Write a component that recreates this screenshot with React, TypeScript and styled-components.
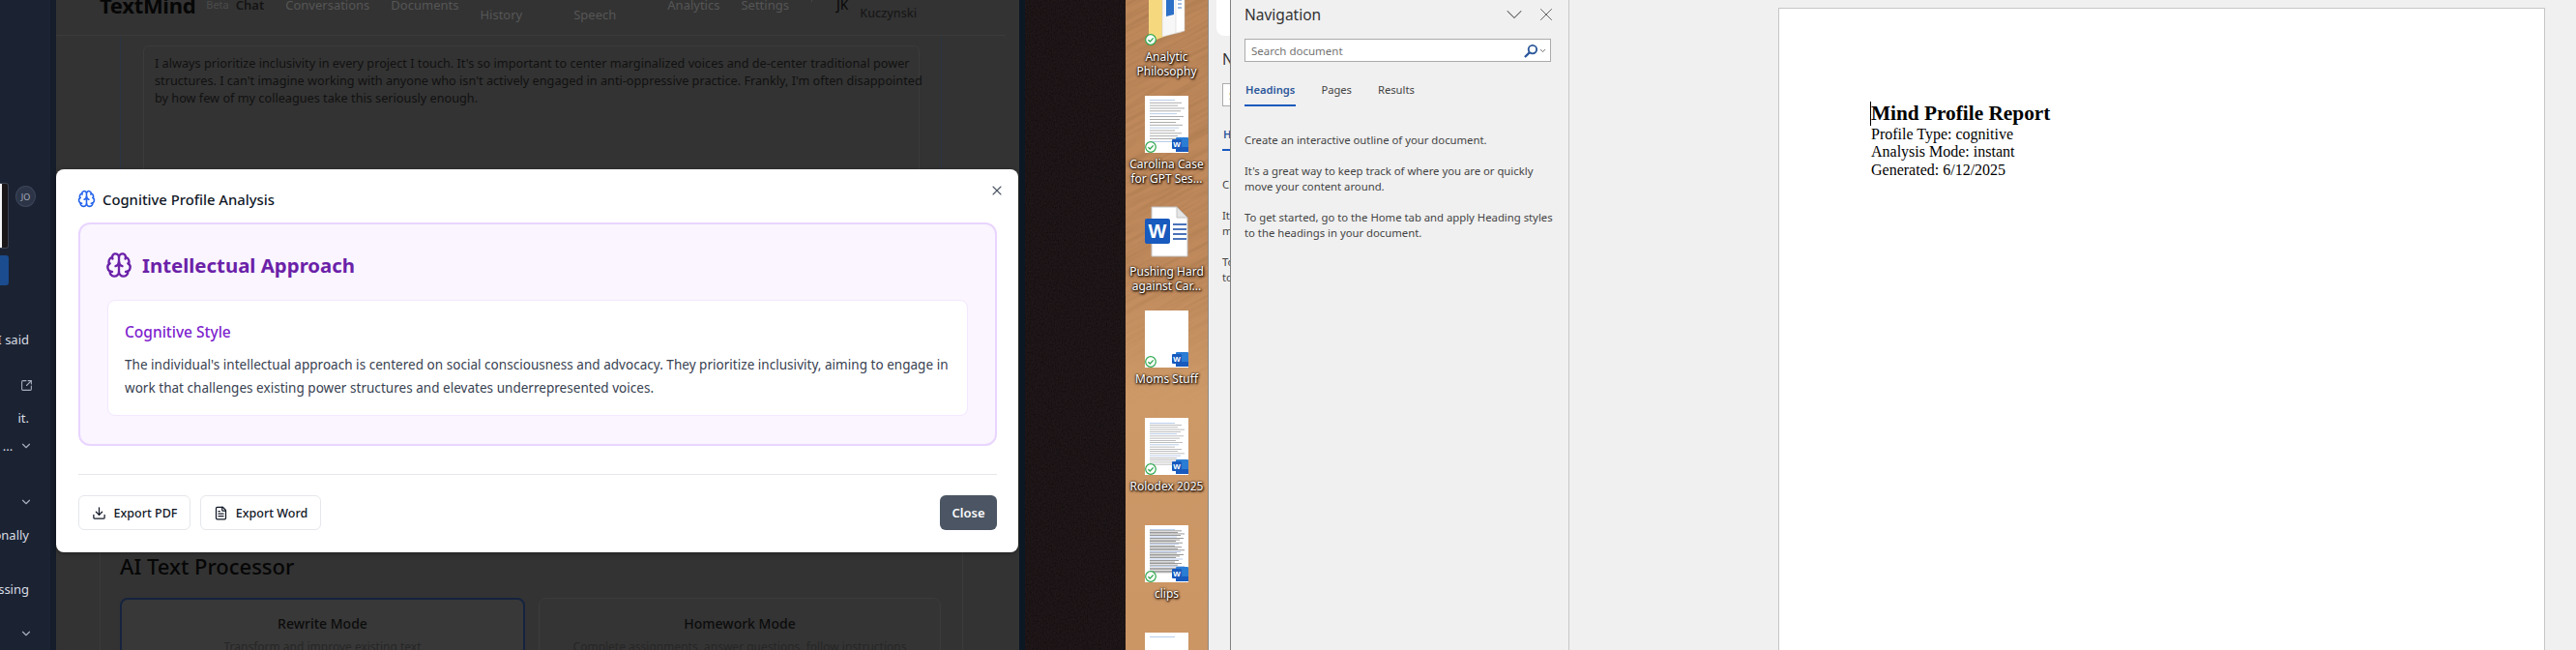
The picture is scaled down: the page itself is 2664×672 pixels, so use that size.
import React from "react";
import styled, { createGlobalStyle } from "styled-components";
import {
  Brain,
  ChevronDown,
  Download,
  FileText,
  SquareArrowOutUpRight,
  X,
} from "lucide-react";

const GlobalStyle = createGlobalStyle`
  html, body { margin: 0; padding: 0; background: #f0f0f0; }
  * { box-sizing: border-box; }
  body { font-family: "Noto Sans", "Open Sans", sans-serif; }
`;

const Page = styled.div`
  display: flex;
  width: 2664px;
  height: 672px;
  overflow: hidden;
`;

/* ---------- dimmed web app ---------- */
const AppShot = styled.section`
  position: relative;
  display: flex;
  flex: 0 0 1054px;
  height: 672px;
  overflow: hidden;
  background: #333333;
`;

const Sidebar = styled.aside`
  flex: 0 0 58px;
  height: 672px;
  padding-top: 189px;
  overflow: hidden;
  color: #d9dde3;
  background: #1b2333;
  border-right: 6px solid #151c2a;
`;

const SideRow = styled.div<{ $h: number; $mt?: number }>`
  display: flex;
  align-items: center;
  justify-content: flex-end;
  width: 52px;
  height: ${(p) => p.$h}px;
  margin-top: ${(p) => p.$mt ?? 0}px;
  padding-right: 20px;
  font-size: 13px;
  white-space: nowrap;
`;

const SideText = styled(SideRow)`
  padding-right: 22px;
`;

const Thumb = styled.div`
  width: 9px;
  height: 68px;
  margin-right: 7px;
  flex: none;
  background: linear-gradient(90deg, #f4f4f4 0 2px, #1b1618 2px);
  border: 1px solid #3c4150;
  border-left: 0;
  border-radius: 0 3px 3px 0;
`;

const Avatar = styled.div`
  display: flex;
  align-items: center;
  justify-content: center;
  width: 21px;
  height: 22px;
  margin: 0 -5px 40px 0;
  flex: none;
  font-size: 9px;
  color: #a8aebb;
  background: #2c3547;
  border: 1px solid #3d4659;
  border-radius: 50%;
`;

const BlueTab = styled.div`
  width: 9px;
  height: 31px;
  margin-right: 23px;
  background: #1a4c8f;
  border-radius: 0 3px 3px 0;
`;

const SideChevron = styled(ChevronDown)`
  width: 14px;
  height: 14px;
  margin-right: -2px;
  color: #a8aebb;
`;

const SideShare = styled(SquareArrowOutUpRight)`
  width: 13px;
  height: 13px;
  margin-right: -2px;
  color: #a8aebb;
`;

const AppMain = styled.main`
  flex: 1;
  min-width: 0;
`;

const AppHeader = styled.header`
  display: flex;
  align-items: center;
  width: 982px;
  height: 64px;
  margin-top: -27px;
  padding-left: 45px;
  border-bottom: 1px solid #3b3b3b;
  white-space: nowrap;
`;

const Logo = styled.div`
  font-size: 22px;
  font-weight: 700;
  letter-spacing: -0.3px;
  color: #060606;
`;

const BetaTag = styled.span`
  margin: 0 7px 0 11px;
  font-size: 11px;
  color: #4b4b4b;
`;

const NavItem = styled.div<{ $active?: boolean; $wide?: boolean }>`
  margin-right: ${(p) => (p.$wide ? 53 : 22)}px;
  font-size: 13px;
  line-height: 20px;
  font-weight: ${(p) => (p.$active ? 600 : 400)};
  color: ${(p) => (p.$active ? "#141414" : "#565656")};
`;

const HeaderRule = styled.div`
  width: 1px;
  height: 14px;
  margin: 0 25px 20px 1px;
  background: #454545;
`;

const UserInitials = styled.div`
  margin-right: 12px;
  font-size: 13.5px;
  font-weight: 500;
  color: #0c0c0c;
`;

const UserName = styled.div`
  font-size: 12.5px;
  line-height: 18px;
  font-weight: 500;
  color: #181818;
`;

const TopPanel = styled.div`
  width: 850px;
  height: 263px;
  margin-left: 66px;
  padding: 10px 22px 0 23px;
  border-left: 1px solid #2b3443;
  border-right: 1px solid #2b3443;
`;

const QuoteBox = styled.div`
  height: 253px;
  padding: 8px 11px;
  font-size: 12.7px;
  line-height: 18px;
  color: #111111;
  border: 1px solid #3b3b3b;
  border-bottom: 0;
  border-radius: 6px 6px 0 0;
  white-space: nowrap;
`;

const BottomPanel = styled.div`
  width: 893px;
  height: 372px;
  margin-left: 45px;
  padding: 269px 0 0 20px;
  border-left: 1px solid #3b3b3b;
  border-right: 1px solid #3b3b3b;
`;

const SectionTitle = styled.h2`
  margin: 0 0 17px;
  font-size: 22px;
  line-height: 32px;
  font-weight: 500;
  color: #060606;
`;

const ModeGrid = styled.div`
  display: grid;
  grid-template-columns: 419px 416px;
  gap: 14px;
`;

const ModeCard = styled.div<{ $selected?: boolean }>`
  height: 100px;
  padding-top: ${(p) => (p.$selected ? 15 : 16)}px;
  text-align: center;
  white-space: nowrap;
  background: ${(p) => (p.$selected ? "#383838" : "#343434")};
  border: ${(p) => (p.$selected ? "2px solid #15233f" : "1px solid #3b3b3b")};
  border-radius: 8px;
`;

const ModeTitle = styled.div`
  font-size: 14px;
  line-height: 20px;
  font-weight: 500;
  color: #0c0c0c;
`;

const ModeText = styled.div`
  margin-top: 5px;
  font-size: 12px;
  line-height: 18px;
  color: #262626;
`;

/* ---------- modal ---------- */
const Modal = styled.div`
  position: absolute;
  left: 58px;
  top: 175px;
  width: 995px;
  height: 396px;
  padding: 0 22px 23px 23px;
  background: #ffffff;
  border-radius: 8px;
  box-shadow: 0 1px 4px rgba(0, 0, 0, 0.35);
`;

const ModalHead = styled.div`
  display: flex;
  align-items: center;
  gap: 7px;
  height: 55px;
  padding-top: 6px;
`;

const HeadBrain = styled(Brain)`
  width: 19px;
  height: 19px;
  margin-left: -1px;
  color: #2563eb;
`;

const ModalTitle = styled.h3`
  margin: 0;
  font-size: 14.8px;
  font-weight: 500;
  color: #111827;
`;

const CloseIcon = styled.button`
  position: absolute;
  top: 14px;
  right: 14px;
  display: flex;
  width: 16px;
  height: 16px;
  padding: 0;
  color: #4b5563;
  background: none;
  border: 0;
`;

const ProfileCard = styled.div`
  height: 231px;
  padding: 30px 28px 0;
  background: #faf5ff;
  border: 2px solid #e9d5ff;
  border-radius: 12px;
`;

const ProfileHead = styled.div`
  display: flex;
  align-items: center;
  gap: 10px;
  height: 24px;
  margin-bottom: 24px;
`;

const ProfileBrain = styled(Brain)`
  width: 28px;
  height: 28px;
  margin-left: -2px;
  color: #6b21a8;
`;

const ProfileTitle = styled.h2`
  margin: 0;
  font-size: 20.4px;
  font-weight: 700;
  color: #6b21a8;
`;

const StyleCard = styled.div`
  height: 120px;
  padding: 20px 17px 0;
  background: #ffffff;
  border: 1px solid #f3e8ff;
  border-radius: 8px;
`;

const StyleTitle = styled.h4`
  margin: 0 0 10px;
  font-size: 15.5px;
  line-height: 24px;
  font-weight: 500;
  color: #7e22ce;
`;

const StyleText = styled.p`
  margin: 0;
  font-size: 13.5px;
  line-height: 24px;
  letter-spacing: 0.03px;
  color: #374151;
  white-space: nowrap;
`;

const ModalFoot = styled.div`
  display: flex;
  justify-content: space-between;
  margin-top: 29px;
  padding-top: 21px;
  border-top: 1px solid #e5e7eb;
`;

const FootGroup = styled.div`
  display: flex;
  gap: 10px;
`;

const OutlineButton = styled.button<{ $w: number }>`
  display: flex;
  align-items: center;
  justify-content: center;
  gap: 8px;
  width: ${(p) => p.$w}px;
  height: 36px;
  padding: 0;
  font: 500 12.5px "Noto Sans", sans-serif;
  color: #111827;
  background: #ffffff;
  border: 1px solid #e5e7eb;
  border-radius: 6px;
  svg { width: 15px; height: 15px; }
`;

const CloseButton = styled.button`
  width: 59px;
  height: 36px;
  padding: 0;
  font: 600 13px "Noto Sans", sans-serif;
  color: #f9fafb;
  background: #4b5563;
  border: 0;
  border-radius: 6px;
`;

/* ---------- desktop ---------- */
const NavyStrip = styled.div`
  flex: 0 0 6px;
  background: #0c1724;
`;

const DarkWood = styled.div`
  position: relative;
  flex: 0 0 104px;
  overflow: hidden;
  background: #201719;
`;

const Texture = styled.svg<{ $fade?: boolean }>`
  position: absolute;
  inset: 0;
  width: 100%;
  height: 100%;
  pointer-events: none;
  ${(p) => p.$fade && "mask-image: linear-gradient(#000 40%, transparent 62%);"}
`;

const Wallpaper = styled.div`
  position: relative;
  flex: 0 0 86px;
  overflow: hidden;
  background: linear-gradient(180deg, #bd875a 0%, #c08a5d 42%, #cd9967 60%, #cb9564 100%);
  border-right: 1px solid #8d8a86;
`;

const IconColumn = styled.div`
  position: relative;
  display: flex;
  flex-direction: column;
  align-items: center;
  margin-top: -12px;
`;

const DeskItem = styled.div`
  display: flex;
  flex-direction: column;
  align-items: center;
  flex: none;
  width: 86px;
  height: 111px;
`;

const DeskGlyph = styled.div`
  position: relative;
  width: 45px;
  height: 59px;
`;

const DocThumb = styled(DeskGlyph)`
  background: #ffffff;
`;

const SyncBadge = styled.svg`
  position: absolute;
  left: 0;
  bottom: 0;
  width: 12px;
  height: 12px;
`;

const WordBadge = styled.svg`
  position: absolute;
  right: 0;
  bottom: 1px;
  width: 17px;
  height: 15px;
`;

const DeskLabel = styled.div`
  margin-top: 4px;
  font-size: 12px;
  line-height: 15px;
  text-align: center;
  white-space: nowrap;
  color: #ffffff;
  text-shadow: 0 0 2px #1c0d02, 1px 1px 2px #1c0d02, 0 1px 3px #1c0d02;
`;

/* ---------- word window ---------- */
const BehindPane = styled.div`
  flex: 0 0 23px;
  overflow: hidden;
  background: #f0f0f0;
  border-right: 1px solid #808080;
`;

const BehindTop = styled.div`
  width: 14px;
  height: 37px;
  margin: 0 0 9px 8px;
  background: #ffffff;
  border-radius: 0 0 0 8px;
`;

const NavPane = styled.div`
  flex: none;
  width: 349px;
  padding: 0 18px 0 14px;
  color: #444444;
  background: #f0f0f0;
`;

const NavTop = styled.div`
  display: flex;
  align-items: center;
  height: 30px;
  margin-bottom: 10px;
`;

const NavTitle = styled.div`
  flex: 1;
  font-size: 15.5px;
  color: #333333;
`;

const PaneButton = styled.div<{ $ml: number; $mr: number }>`
  display: flex;
  margin: 0 ${(p) => p.$mr}px 0 ${(p) => p.$ml}px;
  color: #555555;
`;

const SearchBox = styled.div`
  display: flex;
  align-items: center;
  width: 317px;
  height: 24px;
  padding: 0 3px 0 6px;
  background: #ffffff;
  border: 1px solid #ababab;
`;

const SearchHint = styled.div`
  flex: 1;
  font-size: 11.5px;
  color: #747474;
`;

const TabRow = styled.div`
  display: flex;
  gap: 25px;
  height: 36px;
  margin: 10px 0 27px;
`;

const NavTab = styled.div<{ $active?: boolean }>`
  padding: 10px 1px 0;
  font-size: 11.2px;
  line-height: 18px;
  font-weight: ${(p) => (p.$active ? 600 : 400)};
  color: ${(p) => (p.$active ? "#2b579a" : "#444444")};
  border-bottom: 2px solid ${(p) => (p.$active ? "#185abd" : "transparent")};
`;

const NavText = styled.p`
  margin: 0 0 16px;
  font-size: 11.3px;
  line-height: 16px;
  white-space: nowrap;
`;

const Workspace = styled.div`
  flex: 1;
  padding: 8px 32px 0 216px;
  background: #f0f0f0;
  border-left: 1px solid #c8c8c8;
`;

const DocPage = styled.div`
  height: 700px;
  padding: 96px 0 0 95px;
  font-family: "Liberation Serif", "Times New Roman", serif;
  color: #000000;
  background: #ffffff;
  border: 1px solid #c6c6c6;
`;

const DocTitle = styled.div`
  width: max-content;
  margin-left: -1px;
  font-size: 21.3px;
  line-height: 24.5px;
  font-weight: 700;
  border-left: 1px solid #000000;
`;

const DocLine = styled.div`
  font-size: 16px;
  line-height: 18.6px;
`;

const DarkGrain = () => (
  <Texture aria-hidden="true">
    <filter id="darkGrain">
      <feTurbulence type="fractalNoise" baseFrequency="0.7 0.5" numOctaves={3} seed={4} />
      <feColorMatrix values="0 0 0 0 0  0 0 0 0 0  0 0 0 0 0  1.6 0 0 0 -0.55" />
    </filter>
    <rect width="100%" height="100%" filter="url(#darkGrain)" opacity={0.45} />
  </Texture>
);

// diagonal streaks, only on the upper half of the wallpaper
const WarmGrain = () => (
  <Texture aria-hidden="true" $fade>
    <filter id="warmGrain">
      <feTurbulence type="fractalNoise" baseFrequency="0.015 0.28" numOctaves={2} seed={9} />
      <feColorMatrix values="0 0 0 0 0.3  0 0 0 0 0.15  0 0 0 0 0.05  1.8 0 0 0 -0.7" />
    </filter>
    <rect x="-200" y="-100" width="600" height="900" transform="rotate(-28 40 200)" filter="url(#warmGrain)" opacity={0.4} />
  </Texture>
);

const SyncMark = () => (
  <SyncBadge viewBox="0 0 12 12">
    <circle cx="6" cy="6" r="5.3" fill="#fff" stroke="#2fa84f" strokeWidth="1.2" />
    <path d="M3.4 6.2l1.9 1.8 3.4-3.6" fill="none" stroke="#2fa84f" strokeWidth="1.3" />
  </SyncBadge>
);

const WordMark = () => (
  <WordBadge viewBox="0 0 17 15">
    <rect x="4" y="0" width="13" height="15" rx="1" fill="#2b7cd3" />
    <rect x="4" y="10" width="13" height="5" fill="#185abd" />
    <rect x="0" y="2" width="10" height="10" rx="1" fill="#185abd" />
    <text x="5" y="10" fontSize="8" fontWeight="700" textAnchor="middle" fill="#fff" fontFamily="Liberation Sans, sans-serif">W</text>
  </WordBadge>
);

// fake lines of a document preview
const PreviewLines = ({ count, color, from }: { count: number; color: string; from: number }) => {
  const rows = Array.from({ length: count }, (_, i) => i);
  return (
    <svg viewBox="0 0 45 59" width="45" height="59">
      {rows.map((i) => (
        <rect
          key={i}
          x="5"
          y={from + (i * (50 - from)) / count}
          width={26 + ((i * 7) % 11)}
          height="0.7"
          fill={i % 5 === 0 ? "#9bb7e0" : color}
        />
      ))}
    </svg>
  );
};

const FolderGlyph = () => (
  <svg viewBox="0 0 45 59" width="45" height="59">
    <path d="M4 0h26v46L4 56z" fill="#f6d97f" />
    <path d="M18 4l18-3 2 44-20 5z" fill="#f7f7f7" stroke="#c9c9c9" strokeWidth=".5" />
    <path d="M22 12l8-1v16l-8 2z" fill="#2b6fc7" />
    <path d="M32 1l9 1v42l-9 2z" fill="#fff" stroke="#cfcfcf" strokeWidth=".5" />
    <path d="M34 12h4M34 16h4M34 20h4" stroke="#4a7fc8" strokeWidth="1" />
  </svg>
);

const WordFileGlyph = () => (
  <svg viewBox="0 0 45 59" width="45" height="59">
    <path d="M7 4h26l11 11v40H7z" fill="#fff" stroke="#c2c2c2" />
    <path d="M33 4v11h11z" fill="#e4e4e4" stroke="#c2c2c2" />
    <rect x="0" y="16" width="26" height="26" rx="2" fill="#185abd" />
    <text x="13" y="36" fontSize="20" fontWeight="700" textAnchor="middle" fill="#fff" fontFamily="Liberation Sans, sans-serif">W</text>
    <path d="M29 22h14M29 27h14M29 32h14M29 37h14" stroke="#4a72b8" strokeWidth="2" />
  </svg>
);

const DocItem = ({ lines, label }: { lines?: React.ReactNode; label: React.ReactNode }) => (
  <DeskItem>
    <DocThumb>
      {lines}
      <SyncMark />
      <WordMark />
    </DocThumb>
    <DeskLabel>{label}</DeskLabel>
  </DeskItem>
);

const NavContent = () => (
  <NavPane>
    <NavTop>
      <NavTitle>Navigation</NavTitle>
      <PaneButton $ml={0} $mr={0}><ChevronDown size={28} strokeWidth={0.9} /></PaneButton>
      <PaneButton $ml={8} $mr={-6}><X size={22} strokeWidth={1} /></PaneButton>
    </NavTop>
    <SearchBox>
      <SearchHint>Search document</SearchHint>
      <svg viewBox="0 0 16 16" width="15" height="15">
        <circle cx="9.5" cy="6.5" r="4.5" fill="none" stroke="#2b579a" strokeWidth="2" />
        <path d="M6 10l-5 5" stroke="#2b579a" strokeWidth="2.4" />
      </svg>
      <ChevronDown size={9} strokeWidth={2} color="#444" />
    </SearchBox>
    <TabRow>
      <NavTab $active>Headings</NavTab>
      <NavTab>Pages</NavTab>
      <NavTab>Results</NavTab>
    </TabRow>
    <NavText>Create an interactive outline of your document.</NavText>
    <NavText>
      It's a great way to keep track of where you are or quickly
      <br />
      move your content around.
    </NavText>
    <NavText>
      To get started, go to the Home tab and apply Heading styles
      <br />
      to the headings in your document.
    </NavText>
  </NavPane>
);

const App = () => {
  return (
    <Page>
      <GlobalStyle />
      <AppShot>
        <Sidebar>
          <SideRow $h={68}>
            <Thumb />
            <Avatar>JO</Avatar>
          </SideRow>
          <SideRow $h={31} $mt={7}><BlueTab /></SideRow>
          <SideText $h={18} $mt={47}>I said</SideText>
          <SideRow $h={16} $mt={30}><SideShare /></SideRow>
          <SideText $h={18} $mt={17}>it.</SideText>
          <SideRow $h={18} $mt={11}>...&nbsp;&nbsp;<SideChevron /></SideRow>
          <SideRow $h={16} $mt={41}><SideChevron /></SideRow>
          <SideText $h={18} $mt={17}>personally</SideText>
          <SideText $h={18} $mt={38}>processing</SideText>
          <SideRow $h={16} $mt={29}><SideChevron /></SideRow>
        </Sidebar>
        <AppMain>
          <AppHeader>
            <Logo>TextMind</Logo>
            <BetaTag>Beta</BetaTag>
            <NavItem $active>Chat</NavItem>
            <NavItem>Conversations</NavItem>
            <NavItem>Documents</NavItem>
            <NavItem $wide>&nbsp;<br />History</NavItem>
            <NavItem $wide>&nbsp;<br />Speech</NavItem>
            <NavItem>Analytics</NavItem>
            <NavItem>Settings</NavItem>
            <HeaderRule />
            <UserInitials>JK</UserInitials>
            <UserName>&nbsp;<br />Kuczynski</UserName>
          </AppHeader>
          <TopPanel>
            <QuoteBox>
              I always prioritize inclusivity in every project I touch. It's so important to center marginalized voices and de-center traditional power
              <br />
              structures. I can't imagine working with anyone who isn't actively engaged in anti-oppressive practice. Frankly, I'm often disappointed
              <br />
              by how few of my colleagues take this seriously enough.
            </QuoteBox>
          </TopPanel>
          <BottomPanel>
            <SectionTitle>AI Text Processor</SectionTitle>
            <ModeGrid>
              <ModeCard $selected>
                <ModeTitle>Rewrite Mode</ModeTitle>
                <ModeText>Transform and improve existing text</ModeText>
              </ModeCard>
              <ModeCard>
                <ModeTitle>Homework Mode</ModeTitle>
                <ModeText>Complete assignments, answer questions, follow instructions</ModeText>
              </ModeCard>
            </ModeGrid>
          </BottomPanel>
        </AppMain>
        <Modal>
          <ModalHead>
            <HeadBrain />
            <ModalTitle>Cognitive Profile Analysis</ModalTitle>
          </ModalHead>
          <CloseIcon aria-label="Close"><X size={16} strokeWidth={1.6} /></CloseIcon>
          <ProfileCard>
            <ProfileHead>
              <ProfileBrain />
              <ProfileTitle>Intellectual Approach</ProfileTitle>
            </ProfileHead>
            <StyleCard>
              <StyleTitle>Cognitive Style</StyleTitle>
              <StyleText>
                The individual's intellectual approach is centered on social consciousness and advocacy. They prioritize inclusivity, aiming to engage in
                <br />
                work that challenges existing power structures and elevates underrepresented voices.
              </StyleText>
            </StyleCard>
          </ProfileCard>
          <ModalFoot>
            <FootGroup>
              <OutlineButton $w={116}><Download />Export PDF</OutlineButton>
              <OutlineButton $w={125}><FileText />Export Word</OutlineButton>
            </FootGroup>
            <CloseButton>Close</CloseButton>
          </ModalFoot>
        </Modal>
      </AppShot>
      <NavyStrip />
      <DarkWood>
        <DarkGrain />
      </DarkWood>
      <Wallpaper>
        <WarmGrain />
        <IconColumn>
          <DeskItem>
            <DeskGlyph>
              <FolderGlyph />
              <SyncMark />
            </DeskGlyph>
            <DeskLabel>Analytic<br />Philosophy</DeskLabel>
          </DeskItem>
          <DocItem
            lines={<PreviewLines count={16} color="#8a8a8a" from={4} />}
            label={<>Carolina Case<br />for GPT Ses...</>}
          />
          <DeskItem>
            <DeskGlyph><WordFileGlyph /></DeskGlyph>
            <DeskLabel>Pushing Hard<br />against Car...</DeskLabel>
          </DeskItem>
          <DocItem label="Moms Stuff" />
          <DocItem
            lines={<PreviewLines count={20} color="#a3a3a3" from={5} />}
            label="Rolodex 2025"
          />
          <DocItem
            lines={<PreviewLines count={30} color="#6e6e6e" from={4} />}
            label="clips"
          />
          <DocItem lines={<PreviewLines count={3} color="#8a8a8a" from={4} />} label="" />
        </IconColumn>
      </Wallpaper>
      <BehindPane>
        <BehindTop />
        <NavContent />
      </BehindPane>
      <NavContent />
      <Workspace>
        <DocPage>
          <DocTitle>Mind Profile Report</DocTitle>
          <DocLine>Profile Type: cognitive</DocLine>
          <DocLine>Analysis Mode: instant</DocLine>
          <DocLine>Generated: 6/12/2025</DocLine>
        </DocPage>
      </Workspace>
    </Page>
  );
};

export default App;
